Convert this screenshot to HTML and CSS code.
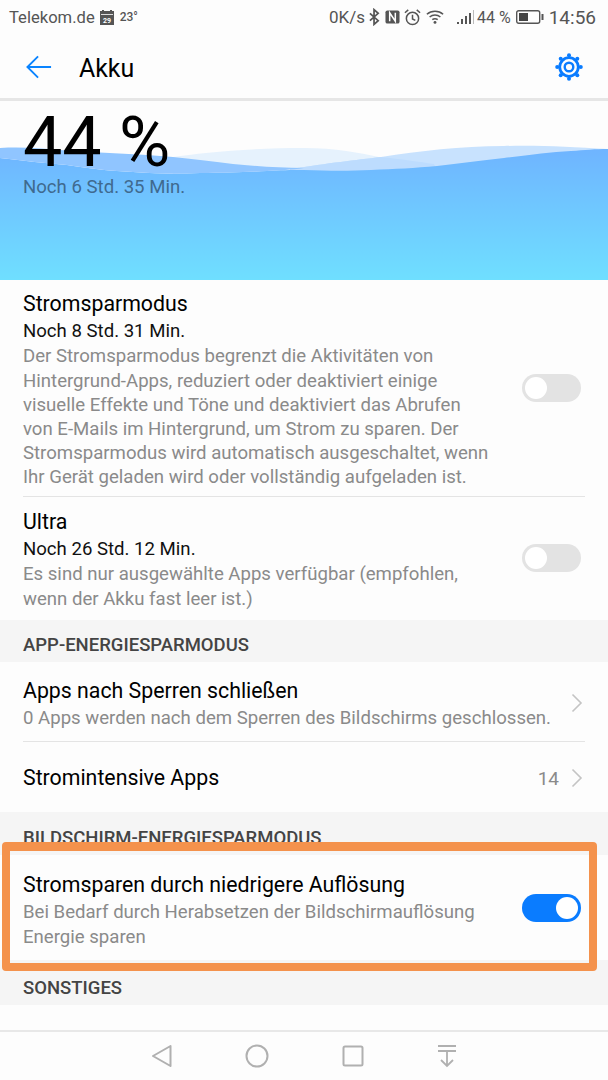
FILE: index.html
```html
<!DOCTYPE html>
<html lang="de">

<head>
  <meta charset="UTF-8">
  <meta name="viewport" content="width=device-width, initial-scale=1.0">
  <title>Akku</title>
  <link rel="stylesheet" href="styles.css">
</head>
<body>

  <div class="screen">
    <div class="statusbar">
      <div class="status-left">
        <span class="carrier">Telekom.de</span>
        <svg class="ic-cal" viewBox="0 0 16 16"><path d="M1 2h2V1h2v1h6V1h2v1h2v14H1z" fill="#555"/><rect x="2" y="5" width="12" height="1" fill="#ddd"/><text x="8" y="14" text-anchor="middle" class="cal-num">29</text></svg>
        <span class="temp">23°</span>
      </div>
      <div class="status-right">
        <span class="speed">0K/s</span>
        <svg class="ic ic-bt" width="11" height="18" viewBox="0 0 12 18"><path d="M1 5l9 8-4.5 4V1L10 5l-9 8" fill="none" stroke="#555" stroke-width="1.9"/></svg>
        <svg class="ic ic-nfc" width="15" height="16" viewBox="0 0 16 16"><rect x="0.5" y="1" width="15" height="14" rx="2" fill="#555"/><path d="M5 12.5V3.500l6 9V3.500" fill="none" stroke="#fff" stroke-width="1.6"/></svg>
        <svg class="ic ic-alarm" width="17" height="17" viewBox="0 0 18 18"><circle cx="9" cy="10" r="6.5" fill="none" stroke="#555" stroke-width="1.6"/><path d="M9 6v4.5l3 1.500M1 4l3.500-3M17 4l-3.500-3" fill="none" stroke="#555" stroke-width="1.6"/></svg>
        <svg class="ic ic-wifi" width="18" height="16" viewBox="0 0 20 16"><path d="M1 5c5-4.500 13-4.500 18 0M4 8c3.500-3 8.500-3 12 0M7 11c2-1.500 4-1.500 6 0" fill="none" stroke="#555" stroke-width="1.7"/><circle cx="10" cy="14" r="1.6" fill="#555"/></svg>
        <svg class="ic ic-signal" width="17" height="16" viewBox="0 0 17 16"><path d="M0 13h2v2H0zM4 10h2v5H4zM8 7h2v8H8zM12 4h2v11h-2z" fill="#555"/><path d="M16 1h1v14h-1z" fill="#bbb"/></svg>
        <span class="pct">44 %</span>
        <svg class="ic ic-batt" width="28" height="16" viewBox="0 0 28 16"><rect x="0.7" y="1.7" width="23" height="12.6" rx="2" fill="none" stroke="#555" stroke-width="1.4"/><rect x="3" y="4" width="9" height="8" fill="#444"/><rect x="25.5" y="5" width="2" height="6" fill="#555"/></svg>
        <span class="clock">14:56</span>
      </div>
    </div>

    <header class="topbar">
      <svg class="back" width="26" height="26" viewBox="0 0 28 26"><path d="M27 13H2M13 1.5L1.5 13 13 24.5" fill="none" stroke="#0a84ff" stroke-width="2"/></svg>
      <h1>Akku</h1>
      <svg class="gear" width="28" height="28" viewBox="0 0 28 28">
        <circle cx="14" cy="14" r="9.3" fill="none" stroke="#0a7cff" stroke-width="2.8"/>
        <circle cx="14" cy="14" r="4.3" fill="none" stroke="#0a7cff" stroke-width="2.4"/>
        <g fill="#0a7cff">
          <circle cx="14" cy="2.2" r="2"/><circle cx="14" cy="25.8" r="2"/>
          <circle cx="2.2" cy="14" r="2"/><circle cx="25.8" cy="14" r="2"/>
          <circle cx="5.7" cy="5.7" r="2"/><circle cx="22.3" cy="5.7" r="2"/>
          <circle cx="5.7" cy="22.3" r="2"/><circle cx="22.3" cy="22.3" r="2"/>
        </g>
      </svg>
    </header>

    <section class="hero">
      <svg class="waves" width="608" height="179" viewBox="0 0 608 179" preserveAspectRatio="none">
        <defs>
          <linearGradient id="sea" x1="0" y1="0" x2="0" y2="1">
            <stop offset="0" stop-color="#6fb4ff"/>
            <stop offset="1" stop-color="#6fdfff"/>
          </linearGradient>
        </defs>
        <!-- back crest -->
        <path d="M173 56C200 52 250 47 304 47C335 47 360 52 381 56.5L434 63V75H173z" fill="#e6f2fd"/>
        <!-- right crest -->
        <path d="M290 68C330 62 355 59 381 56C420 50 460 45 504 45C540 44 570 46 608 48V75H290z" fill="#c8e2fe"/>
        <path d="M290 68C330 62 355 59 381 56C400 58 420 61 434 63L440 75H290z" fill="#bddcfe"/>
        <!-- front water -->
        <path d="M0 57C25 60 45 62 67 64C95 68 110 70 133 71C160 73 180 73 200 72C225 72 250 71 267 70C280 69 290 69 304 69C330 70 350 70 371 69C395 68 415 67 437 65C460 62 480 60 504 57C530 54 550 51 571 50C585 49 595 48 608 48V179H0z" fill="url(#sea)"/>
        <path d="M0 47C20 46 40 47 60 49C100 52 140 53 173 56C195 58 215 61 233 63C255 65 280 67 304 67C290 69 280 69 267 70C250 71 225 72 200 72C180 73 160 73 133 71C110 70 95 68 67 64C45 62 25 60 0 57z" fill="#90c5ff"/>
      </svg>
      <div class="hero-text">
        <div class="level">44 %</div>
        <div class="remain">Noch 6 Std. 35 Min.</div>
      </div>
    </section>

    <div class="list">
      <div class="row row-power">
        <div class="row-body">
          <div class="title">Stromsparmodus</div>
          <div class="time">Noch 8 Std. 31 Min.</div>
          <div class="desc">Der Stromsparmodus begrenzt die Aktivitäten von Hintergrund-Apps, reduziert oder deaktiviert einige visuelle Effekte und Töne und deaktiviert das Abrufen von E-Mails im Hintergrund, um Strom zu sparen. Der Stromsparmodus wird automatisch ausgeschaltet, wenn Ihr Gerät geladen wird oder vollständig aufgeladen ist.</div>
        </div>
        <span class="switch"></span>
      </div>
      <div class="row row-ultra">
        <div class="row-body">
          <div class="title">Ultra</div>
          <div class="time">Noch 26 Std. 12 Min.</div>
          <div class="desc">Es sind nur ausgewählte Apps verfügbar (empfohlen, wenn der Akku fast leer ist.)</div>
        </div>
        <span class="switch"></span>
      </div>

      <div class="section section-app">APP-ENERGIESPARMODUS</div>
      <div class="row row-apps">
        <div class="row-body">
          <div class="title">Apps nach Sperren schließen</div>
          <div class="desc desc-nowrap">0 Apps werden nach dem Sperren des Bildschirms geschlossen.</div>
        </div>
        <svg class="chev" width="12" height="20" viewBox="0 0 12 20"><path d="M1.5 1.5L10 10l-8.5 8.5" fill="none" stroke="#c4c4c4" stroke-width="1.6"/></svg>
      </div>
      <div class="row row-intense">
        <div class="row-body">
          <div class="title">Stromintensive Apps</div>
        </div>
        <span class="count">14</span>
        <svg class="chev" width="12" height="20" viewBox="0 0 12 20"><path d="M1.5 1.5L10 10l-8.5 8.5" fill="none" stroke="#c4c4c4" stroke-width="1.6"/></svg>
      </div>

      <div class="section section-screen">BILDSCHIRM-ENERGIESPARMODUS</div>
      <div class="row row-res">
        <div class="row-body">
          <div class="title">Stromsparen durch niedrigere Auflösung</div>
          <div class="desc">Bei Bedarf durch Herabsetzen der Bildschirmauflösung Energie sparen</div>
        </div>
        <span class="switch on"></span>
      </div>

      <div class="section section-other">SONSTIGES</div>
    </div>

    <nav class="navbar">
      <svg width="21" height="24" viewBox="0 0 21 24"><path d="M19.5 2L2 12l17.5 10z" fill="none" stroke="#b0b0b0" stroke-width="2" stroke-linejoin="round"/></svg>
      <svg width="24" height="24" viewBox="0 0 24 24"><circle cx="12" cy="12" r="10.5" fill="none" stroke="#b0b0b0" stroke-width="2"/></svg>
      <svg width="22" height="22" viewBox="0 0 22 22"><rect x="1.5" y="1.5" width="19" height="19" rx="1.5" fill="none" stroke="#b0b0b0" stroke-width="2"/></svg>
      <svg width="20" height="24" viewBox="0 0 20 24"><path d="M1 2h18M1 7h18M10 7v15M4 16l6 6 6-6" fill="none" stroke="#b0b0b0" stroke-width="1.8"/></svg>
    </nav>

    <div class="highlight"></div>
  </div>

</body>
</html>
```

FILE: styles.css
```css
* {
  box-sizing: border-box;
  margin: 0;
  padding: 0;
  font-family: Roboto, Arial, sans-serif;
}

body {
  background-color: #fdfdfd;
  width: 608px;
  height: 1080px;
  overflow: hidden;
}

.screen {
  position: relative;
  display: flex;
  flex-direction: column;
  width: 608px;
  height: 1080px;
}

/* status bar */
.statusbar {
  display: flex;
  justify-content: space-between;
  align-items: center;
  height: 36px;
  padding: 0 12px 2px 9px;
  color: #555;
}

.status-left,
.status-right {
  display: flex;
  align-items: center;
}

.carrier {
  font-size: 16.6px;
}

.ic-cal {
  width: 16px;
  height: 16px;
  margin-left: 4px;
}

.cal-num {
  font-size: 7px;
  font-weight: 700;
  fill: #fff;
}

.temp {
  font-size: 12px;
  font-weight: 500;
  margin-left: 5px;
}

.speed {
  font-size: 17px;
}

.ic-bt {
  margin-left: 4px;
}

.ic-nfc {
  margin-left: 5px;
}

.ic-alarm {
  margin-left: 4px;
}

.ic-wifi {
  margin-left: 5px;
}

.ic-signal {
  margin-left: 13px;
}

.pct {
  font-size: 16px;
  margin-left: 3px;
}

.ic-batt {
  margin-left: 5px;
}

.clock {
  font-size: 19px;
  margin-left: 5px;
}

/* title bar */
.topbar {
  display: flex;
  align-items: center;
  height: 65px;
  padding: 0 25px 0 26px;
  border-bottom: 3px solid #e6e6e6;
}

.topbar h1 {
  flex: 1;
  margin-left: 27px;
  padding-top: 2px;
  font-size: 24.9px;
  font-weight: 400;
  color: #000;
}

/* battery wave */
.hero {
  position: relative;
  height: 179px;
}

.waves {
  position: absolute;
  top: 0;
  left: 0;
}

.hero-text {
  position: relative;
  padding: 6px 23px 0;
}

.level {
  font-size: 70px;
  line-height: 70px;
  color: #000;
}

.remain {
  font-size: 18.6px;
  line-height: 20px;
  color: #3f6a8f;
}

/* settings rows */
.list {
  flex: 1;
  overflow: hidden;
}

.row {
  display: flex;
  align-items: center;
  margin-left: 23px;
  padding-right: 27px;
}

.row-body {
  flex: 1;
}

.row-power {
  height: 217px;
  margin-right: 23px;
  padding-top: 3px;
  padding-right: 4px;
  border-bottom: 1px solid #e4e4e4;
}

.row-ultra {
  height: 123px;
  padding-top: 1px;
}

.row-power .row-body,
.row-ultra .row-body,
.row-res .row-body {
  flex: none;
  width: 470px;
}

.row-apps {
  height: 80px;
  margin-right: 23px;
  padding-top: 3px;
  padding-right: 0;
  border-bottom: 1px solid #e4e4e4;
}

.row-intense {
  height: 70px;
  margin-right: 23px;
  padding-top: 2px;
  padding-right: 0;
}

.row-res {
  height: 105px;
  padding-top: 4px;
}

.title {
  font-size: 21.3px;
  line-height: 30px;
  color: #000;
}

.time {
  font-size: 18.6px;
  line-height: 25px;
  color: #111;
}

.desc {
  font-size: 18.6px;
  line-height: 24.2px;
  color: #8a8a8a;
}

.desc-nowrap {
  white-space: nowrap;
}

.section {
  padding-left: 23px;
  background-color: #f5f5f5;
  font-size: 18.5px;
  font-weight: 500;
  color: #444;
}

.section-app {
  height: 42px;
  line-height: 50px;
}

.section-screen {
  height: 43px;
  line-height: 52px;
}

.section-other {
  height: 45px;
  line-height: 56px;
}

.count {
  margin-right: 12px;
  font-size: 19px;
  color: #8a8a8a;
}

.chev {
  margin-right: 2px;
}

/* toggles */
.switch {
  position: relative;
  flex: none;
  width: 59px;
  height: 28px;
  margin-top: -3px;
  margin-left: auto;
  border-radius: 14px;
  background-color: #e3e3e3;
}

.switch::after {
  content: "";
  position: absolute;
  top: 3px;
  left: 3px;
  width: 22px;
  height: 22px;
  border-radius: 50%;
  background-color: #fff;
}

.switch.on {
  background-color: #0a7cff;
}

.switch.on::after {
  left: 34px;
}

/* bottom navigation */
.navbar {
  display: flex;
  align-items: center;
  justify-content: center;
  gap: 73px;
  height: 50px;
  border-top: 2px solid #e8e8e8;
}

/* orange marker around the row */
.highlight {
  position: absolute;
  top: 842px;
  left: 2px;
  width: 595px;
  height: 129px;
  border: 8px solid #f4924c;
  border-top-width: 9px;
  border-radius: 4px;
}
```
